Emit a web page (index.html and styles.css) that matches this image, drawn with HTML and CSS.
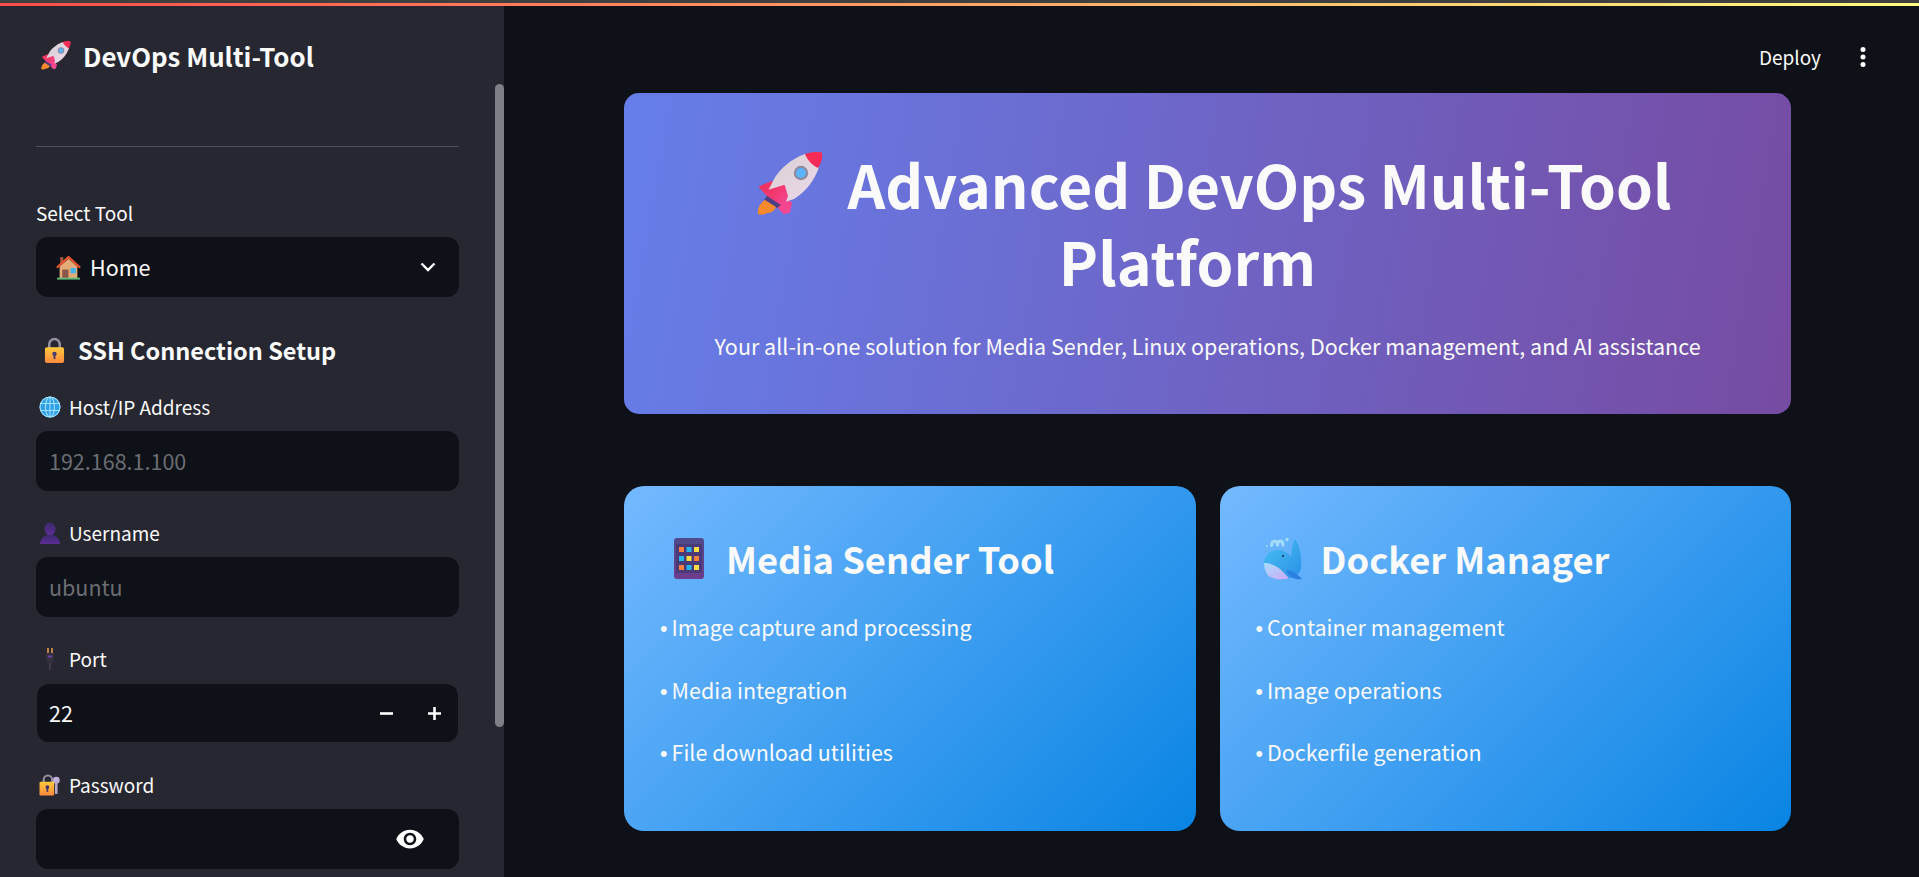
FILE: index.html
```html
<!DOCTYPE html>
<html lang="en">
<head>
<meta charset="utf-8">
<title>DevOps Multi-Tool</title>
<link rel="stylesheet" href="styles.css">
</head>
<body>
<svg class="defs" width="0" height="0" aria-hidden="true">
  <defs>
    <linearGradient id="gBody" x1="0" y1="0" x2="1" y2="1"><stop offset="0" stop-color="#d8d0d2"/><stop offset="1" stop-color="#ecd8ea"/></linearGradient>
    <linearGradient id="gRed" x1="0" y1="0" x2="1" y2="1"><stop offset="0" stop-color="#f9304f"/><stop offset="1" stop-color="#f0285e"/></linearGradient>
    <linearGradient id="gFin" x1="0" y1="0" x2="1" y2="1"><stop offset="0" stop-color="#f0305a"/><stop offset="1" stop-color="#f54a9a"/></linearGradient>
    <linearGradient id="gLock" x1="0" y1="0" x2="0" y2="1"><stop offset="0" stop-color="#ffc93c"/><stop offset="1" stop-color="#ff8a3c"/></linearGradient>
    <linearGradient id="gBust" x1="0" y1="0" x2="0" y2="1"><stop offset="0" stop-color="#3d2a6e"/><stop offset="1" stop-color="#5b2d96"/></linearGradient>
    <linearGradient id="gTab" x1="0" y1="0" x2="0" y2="1"><stop offset="0" stop-color="#4f4a8c"/><stop offset="1" stop-color="#6f3c8c"/></linearGradient>
    <linearGradient id="gWhale" x1="0" y1="0" x2="1" y2="1"><stop offset="0" stop-color="#48c0f0"/><stop offset="1" stop-color="#2a90e8"/></linearGradient>
    <linearGradient id="gBelly" x1="0" y1="0" x2="1" y2="1"><stop offset="0" stop-color="#a8dcfc"/><stop offset="1" stop-color="#cfa8f4"/></linearGradient>
    <symbol id="rocket" viewBox="0 0 66 66">
      <path fill="url(#gFin)" stroke="url(#gFin)" stroke-width="2" stroke-linejoin="round" d="M3 35 15 30 26 45 34 51 32 60 27 61Z"/>
      <path fill="url(#gBody)" d="M48 2C34 7 22 17 16 29L11 39 28 50 37 47C50 39 58 27 62 15Z"/>
      <path fill="url(#gRed)" d="M48 2C54 0 62-1 65 1 66 6 64 11 61 16 56 14 50 8 48 2Z"/>
      <circle cx="44" cy="21" r="7.200" fill="#8d8a9e"/><circle cx="44" cy="21" r="5" fill="#5cb4fc"/>
      <path fill="url(#gFin)" stroke="url(#gFin)" stroke-width="2" stroke-linejoin="round" d="M11 39 27 34 30 44 26 55Z"/>
      <path fill="#4b3f86" d="M7 48 10 44 24 53 20 56Z"/>
      <path fill="#f78a2c" d="M8 48 19 55C17 60 13 61 10 61 7 63 3 63 1 62 0 57 3 51 8 48Z"/>
    </symbol>
    <symbol id="house" viewBox="0 0 24 24">
      <rect x="4" y="2" width="3" height="7" fill="#a0583c"/>
      <path fill="#e2ab78" d="M3.5 11 12 3.5 20.500 11V22H3.500Z"/>
      <path fill="none" stroke="#e8542f" stroke-width="2.200" stroke-linecap="round" stroke-linejoin="round" d="M1.500 11.500 12 2 22.500 11.500"/>
      <rect x="6" y="14" width="6" height="8" fill="#8a5648"/>
      <rect x="14" y="12.500" width="5" height="5" fill="#3fb4ee"/>
      <rect x="1" y="21.800" width="22" height="1.800" fill="#5fbf7a"/>
    </symbol>
    <symbol id="lock" viewBox="0 0 22 28">
      <path fill="none" stroke="#948fa2" stroke-width="2.600" d="M5.500 12V7.500a5.500 5.500 0 0 1 11 0V12"/>
      <rect x="1" y="10.500" width="20" height="16.500" rx="2" fill="url(#gLock)"/>
      <circle cx="11" cy="17.500" r="2.300" fill="#4a3a70"/><rect x="10" y="18" width="2" height="5" fill="#4a3a70"/>
    </symbol>
    <symbol id="globe" viewBox="0 0 22 22">
      <circle cx="11" cy="11" r="10.500" fill="#2f9fe8"/>
      <g fill="none" stroke="#9fe2fb" stroke-width="1.100">
        <circle cx="11" cy="11" r="10"/><ellipse cx="11" cy="11" rx="4.500" ry="10"/><path d="M11 1V21M1.500 7.500H20.500M1.500 14.500H20.500"/>
      </g>
    </symbol>
    <symbol id="bust" viewBox="0 0 20 22">
      <ellipse cx="10" cy="7" rx="5.500" ry="6.500" fill="url(#gBust)"/>
      <path fill="url(#gBust)" d="M0 22C.5 16 4 14 7 13H13C16 14 19.500 16 20 22Z"/>
    </symbol>
    <symbol id="plug" viewBox="0 0 10 22">
      <rect x="2.200" y="0" width="1.600" height="5" fill="#e59a4a"/><rect x="6.200" y="0" width="1.600" height="5" fill="#e59a4a"/>
      <path fill="#35303e" d="M.5 5H9.500L8.500 13 6.500 15H3.500L1.500 13Z"/>
      <rect x="3" y="7.500" width="4" height="2" fill="#6a3fa8"/>
      <rect x="3.800" y="15" width="2.400" height="7" fill="#3f3a48"/>
    </symbol>
    <symbol id="lockkey" viewBox="0 0 20 21">
      <circle cx="16" cy="6" r="3.300" fill="#c0b0d8"/><rect x="14.800" y="7" width="2.400" height="12" fill="#b8a8d0"/>
      <path fill="none" stroke="#948fa2" stroke-width="2" d="M4 8V5.500a4 4 0 0 1 8 0V8"/>
      <rect x="0" y="7.500" width="14" height="13" rx="1.200" fill="url(#gLock)"/>
      <circle cx="7.500" cy="12.500" r="1.800" fill="#3a3368"/><rect x="6.700" y="13" width="1.600" height="4" fill="#3a3368"/>
    </symbol>
    <symbol id="tablet" viewBox="0 0 30 41">
      <rect width="30" height="41" rx="3" fill="url(#gTab)"/>
      <rect x="2" y="6" width="26" height="29" fill="#4b3a78"/>
      <g fill="#f9803c"><rect x="5" y="9" width="5" height="5"/><rect x="20" y="18" width="5" height="5"/><rect x="5" y="27" width="5" height="5"/></g>
      <g fill="#22b8ee"><rect x="12.500" y="9" width="5" height="5"/><rect x="5" y="18" width="5" height="5"/><rect x="12.500" y="27" width="5" height="5"/></g>
      <g fill="#fbdc44"><rect x="20" y="9" width="5" height="5"/><rect x="12.500" y="18" width="5" height="5"/><rect x="20" y="27" width="5" height="5"/></g>
    </symbol>
    <symbol id="whale" viewBox="0 0 40 43">
      <path fill="none" stroke="#a4dcf8" stroke-width="3" stroke-linecap="round" d="M8.500 8.500C9 3 14 2.500 14.500 8M20 8C20 3 15 2.500 14.500 8"/>
      <circle cx="24" cy="2.500" r="1.700" fill="#a4dcf8"/><circle cx="4" cy="9" r=".9" fill="#a4dcf8"/>
      <path fill="url(#gWhale)" d="M1 27C1 18 8 13 15 13 21 13 25 16 28 20 29 14 29 8 32 2 36 8 39 18 38 27 39 33 36 38 30 40 20 44 8 42 4 37 2 34 1 31 1 27Z"/>
      <path fill="url(#gBelly)" d="M1 26C9 26 16 30 21 36L26 41C18 44 7 42 4 37 2 34 1 30 1 26Z"/>
      <path fill="#2a7fe0" d="M23 34C28 32 33 36 39 42 33 43 27 41 23 34Z"/>
      <circle cx="20" cy="19" r="1" fill="#1a2440"/>
    </symbol>
  </defs>
</svg>
<div class="chrome-line"></div>
<div class="deco-line"></div>
<div class="app">
  <aside class="sidebar">
    <div class="brand"><svg class="emoji em-rocket-s"><use href="#rocket"/></svg><span>DevOps Multi-Tool</span></div>
    <hr class="rule">
    <div class="label label-first">Select Tool</div>
    <div class="field field-select">
      <svg class="emoji em-house"><use href="#house"/></svg><span class="value">Home</span>
      <svg class="chev" viewBox="0 0 16 10"><path d="M1.500 1.500 8 8 14.500 1.500" fill="none" stroke="#fff" stroke-width="2.400"/></svg>
    </div>
    <h3 class="section"><svg class="emoji em-lock"><use href="#lock"/></svg><span>SSH Connection Setup</span></h3>
    <div class="label"><svg class="emoji em-small"><use href="#globe"/></svg>Host/IP Address</div>
    <div class="field"><span class="placeholder">192.168.1.100</span></div>
    <div class="label"><svg class="emoji em-small"><use href="#bust"/></svg>Username</div>
    <div class="field"><span class="placeholder">ubuntu</span></div>
    <div class="label"><svg class="emoji em-small em-plug"><use href="#plug"/></svg>Port</div>
    <div class="field field-number">
      <span class="value">22</span>
      <svg class="step" viewBox="0 0 13 13"><path d="M0 6.500H13" stroke="#fff" stroke-width="2.600"/></svg>
      <svg class="step step-plus" viewBox="0 0 13 13"><path d="M0 6.500H13M6.500 0V13" stroke="#fff" stroke-width="2.600"/></svg>
    </div>
    <div class="label label-last"><svg class="emoji em-small"><use href="#lockkey"/></svg>Password</div>
    <div class="field field-password">
      <svg class="eye" viewBox="0 0 24 24"><path fill="#fff" d="M12 4.500C7 4.500 2.730 7.610 1 12c1.730 4.390 6 7.500 11 7.500s9.270-3.110 11-7.500c-1.730-4.390-6-7.500-11-7.500zM12 17c-2.760 0-5-2.240-5-5s2.240-5 5-5 5 2.240 5 5-2.240 5-5 5zm0-8c-1.660 0-3 1.340-3 3s1.340 3 3 3 3-1.340 3-3-1.340-3-3-3z"/></svg>
    </div>
    <div class="scrollthumb"></div>
  </aside>
  <main class="main">
    <header class="topbar">
      <span class="deploy">Deploy</span>
      <svg class="kebab" viewBox="0 0 6 20"><circle cx="3" cy="2.500" r="2.500" fill="#fff"/><circle cx="3" cy="10" r="2.500" fill="#fff"/><circle cx="3" cy="17.500" r="2.500" fill="#fff"/></svg>
    </header>
    <section class="hero">
      <h1 class="hero-title"><svg class="emoji em-rocket-l"><use href="#rocket"/></svg>Advanced DevOps Multi-Tool<br>Platform<span class="anchor"></span></h1>
      <p class="hero-sub">Your all-in-one solution for Media Sender, Linux operations, Docker management, and AI assistance</p>
    </section>
    <section class="cards">
      <article class="card">
        <h2 class="card-title"><svg class="emoji em-tablet"><use href="#tablet"/></svg>Media Sender Tool</h2>
        <p class="item"><span class="dot">• </span>Image capture and processing</p>
        <p class="item"><span class="dot">• </span>Media integration</p>
        <p class="item"><span class="dot">• </span>File download utilities</p>
      </article>
      <article class="card">
        <h2 class="card-title"><svg class="emoji em-whale"><use href="#whale"/></svg>Docker Manager</h2>
        <p class="item"><span class="dot">• </span>Container management</p>
        <p class="item"><span class="dot">• </span>Image operations</p>
        <p class="item"><span class="dot">• </span>Dockerfile generation</p>
      </article>
    </section>
  </main>
</div>
</body>
</html>
```
FILE: styles.css
```css
* { box-sizing: border-box; }
html, body { margin: 0; height: 100%; overflow: hidden; }
body {
  display: flex;
  flex-direction: column;
  background: #0e1117;
  color: #fafafa;
  font-family: "Noto Sans CJK SC", "Noto Sans", sans-serif;
}
.defs { display: block; height: 0; }
.chrome-line { height: 3px; background: #3f3f3f; flex: none; }
.deco-line { height: 3px; flex: none; background: linear-gradient(90deg, #ff4b4b, #fffd80); }
.app { flex: 1; display: flex; min-height: 0; }
.emoji { flex: none; }

.sidebar {
  position: relative;
  width: 504px;
  flex: none;
  background: #262730;
  padding: 30px 45px 0 36px;
  overflow: hidden;
}
.scrollthumb {
  position: absolute;
  right: 0;
  top: 78px;
  width: 9px;
  height: 643px;
  border-radius: 5px;
  background: #7f7f87;
}
.brand {
  display: flex;
  align-items: center;
  height: 40px;
  font-size: 25.800px;
  font-weight: 600;
  line-height: 40px;
}
.em-rocket-s { width: 30px; height: 30px; margin: 0 12px 0 5px; }
.rule { height: 1px; margin: 70px 0 0; border: 0; background: #4f5058; }
.label {
  display: flex;
  align-items: center;
  height: 24px;
  margin-top: 30px;
  font-size: 19px;
  line-height: 24px;
}
.label-first { margin-top: 54px; }
.label-last { margin-top: 31px; }
.em-small { width: 22px; height: 22px; margin: 0 8px 0 3px; }
.em-plug { width: 10px; margin: 0 14px 0 9px; }
.field {
  display: flex;
  align-items: center;
  height: 60px;
  margin-top: 12px;
  padding: 0 13px;
  border-radius: 12px;
  background: #0e1117;
  font-size: 21.500px;
  line-height: 30px;
}
.placeholder { color: #6b6d73; }
.value { color: #fafafa; }
.field-select { padding: 0 23px 0 20px; }
.em-house { width: 25px; height: 25px; margin-right: 9px; }
.chev { width: 16px; height: 10px; margin-left: auto; }
.field-number { height: 58px; margin: 13px 1px 0; padding: 0 17.500px 0 12px; }
.step { width: 13px; height: 13px; margin-left: auto; }
.step-plus { margin-left: 35px; }
.field-password { justify-content: flex-end; padding-right: 34px; }
.eye { width: 30px; height: 30px; }
.section {
  display: flex;
  align-items: center;
  height: 36px;
  margin: 35px 0 -3px;
  font-size: 23.500px;
  font-weight: 600;
  line-height: 36px;
}
.em-lock { width: 21px; height: 27px; margin: 0 13px 0 8px; }

.main {
  flex: 1;
  min-width: 0;
  display: flex;
  flex-direction: column;
  padding: 0 128px 0 120px;
}
.topbar {
  display: flex;
  align-items: center;
  justify-content: flex-end;
  flex: none;
  height: 87px;
  margin-right: -128px;
  padding: 15px 53px 0 0;
}
.deploy { font-size: 19px; line-height: 24px; }
.kebab { width: 6px; height: 20px; margin-left: 39px; }
.hero {
  display: flex;
  flex-direction: column;
  align-items: center;
  flex: none;
  height: 321px;
  padding-top: 52px;
  border-radius: 15px;
  background: linear-gradient(100deg, #667eea, #764ba2);
  text-align: center;
}
.hero-title {
  margin: 0;
  font-size: 59px;
  font-weight: 700;
  line-height: 77px;
}
.em-rocket-l { width: 66px; height: 66px; margin: 0 25px 0 13px; vertical-align: -9px; }
.anchor { display: inline-block; width: 40px; }
.hero-sub { margin: 31px 0 0; font-size: 21.500px; line-height: 32px; }
.cards {
  display: grid;
  grid-template-columns: 1fr 1fr;
  gap: 24px;
  flex: none;
  height: 345px;
  margin-top: 72px;
}
.card {
  padding: 48px 34px 0;
  border-radius: 20px;
  background: linear-gradient(135deg, #74b9ff, #0984e3);
}
.card-title {
  display: flex;
  align-items: center;
  height: 48px;
  margin: 0 0 29px 16px;
  font-size: 36.300px;
  font-weight: 600;
  line-height: 48px;
}
.em-tablet { width: 30px; height: 41px; margin-right: 22px; }
.em-whale { width: 40px; height: 43px; margin: 0 18px 0 -7px; }
.item { height: 32px; margin: 0 0 30.500px; font-size: 21.500px; line-height: 32px; }
.dot { margin: 0 -2px 0 2px; font-family: "Liberation Sans", sans-serif; }
```
